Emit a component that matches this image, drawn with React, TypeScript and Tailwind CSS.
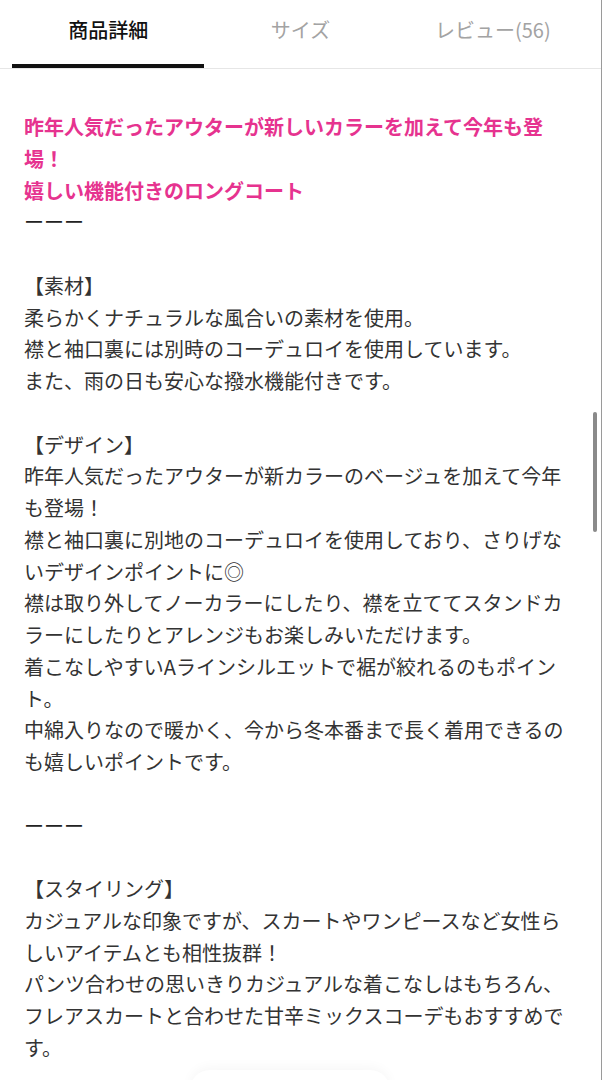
import React from "react";

const tabs = ["商品詳細", "サイズ", "レビュー(56)"];

const heading = [
  "昨年人気だったアウターが新しいカラーを加えて今年も登場！",
  "嬉しい機能付きのロングコート",
];

const body: string[] = [
  "ーーー",
  "",
  "【素材】",
  "柔らかくナチュラルな風合いの素材を使用。",
  "襟と袖口裏には別時のコーデュロイを使用しています。",
  "また、雨の日も安心な撥水機能付きです。",
  "",
  "【デザイン】",
  "昨年人気だったアウターが新カラーのベージュを加えて今年も登場！",
  "襟と袖口裏に別地のコーデュロイを使用しており、さりげないデザインポイントに◎",
  "襟は取り外してノーカラーにしたり、襟を立ててスタンドカラーにしたりとアレンジもお楽しみいただけます。",
  "着こなしやすいAラインシルエットで裾が絞れるのもポイント。",
  "中綿入りなので暖かく、今から冬本番まで長く着用できるのも嬉しいポイントです。",
  "",
  "ーーー",
  "",
  "【スタイリング】",
  "カジュアルな印象ですが、スカートやワンピースなど女性らしいアイテムとも相性抜群！",
  "パンツ合わせの思いきりカジュアルな着こなしはもちろん、フレアスカートと合わせた甘辛ミックスコーデもおすすめです。",
];

export default function App() {
  return (
    <div
      className="relative w-[602px] h-[1080px] overflow-hidden bg-white border-r border-[#9a9a9a]"
      style={{ fontFamily: '"Noto Sans CJK JP", "Noto Sans", sans-serif' }}
    >
      {/* Tabs */}
      <div className="flex px-3 border-b border-[#e6e6e6]">
        {tabs.map((t, i) => (
          <div key={t} className="flex-1 flex flex-col items-center">
            <div
              className={
                i === 0
                  ? "h-[60px] flex items-center text-[20px] font-medium text-[#111]"
                  : "h-[60px] flex items-center text-[20px] text-[#a3a3a3]"
              }
            >
              {t}
            </div>
            <div className="h-[4px]" />
            <div
              className={
                i === 0 ? "h-[4px] w-full bg-[#111]" : "h-[4px] w-full bg-transparent"
              }
            />
          </div>
        ))}
      </div>

      {/* Content */}
      <div className="pl-6 pt-[42px] w-[570px] text-[20px] leading-[31.75px] text-[#333]">
        <div className="font-bold text-[#e6338f]">
          {heading.map((h, i) => (
            <div key={i}>{h}</div>
          ))}
        </div>
        {body.map((line, i) =>
          line === "" ? (
            <div key={i} className="h-[31.75px]" />
          ) : line === "ーーー" ? (
            <div key={i} className="text-[#222]">
              {line}
            </div>
          ) : (
            <div key={i}>{line}</div>
          )
        )}
      </div>

      {/* Scrollbar */}
      <div className="absolute left-[593px] top-[412px] w-[4px] h-[120px] rounded-full bg-[#8a8a8a]" />

      {/* Faint floating shadow at bottom */}
      <div className="absolute left-[190px] top-[1070px] w-[200px] h-[40px] rounded-full bg-white shadow-[0_-3px_12px_rgba(0,0,0,0.035)]" />
    </div>
  );
}
